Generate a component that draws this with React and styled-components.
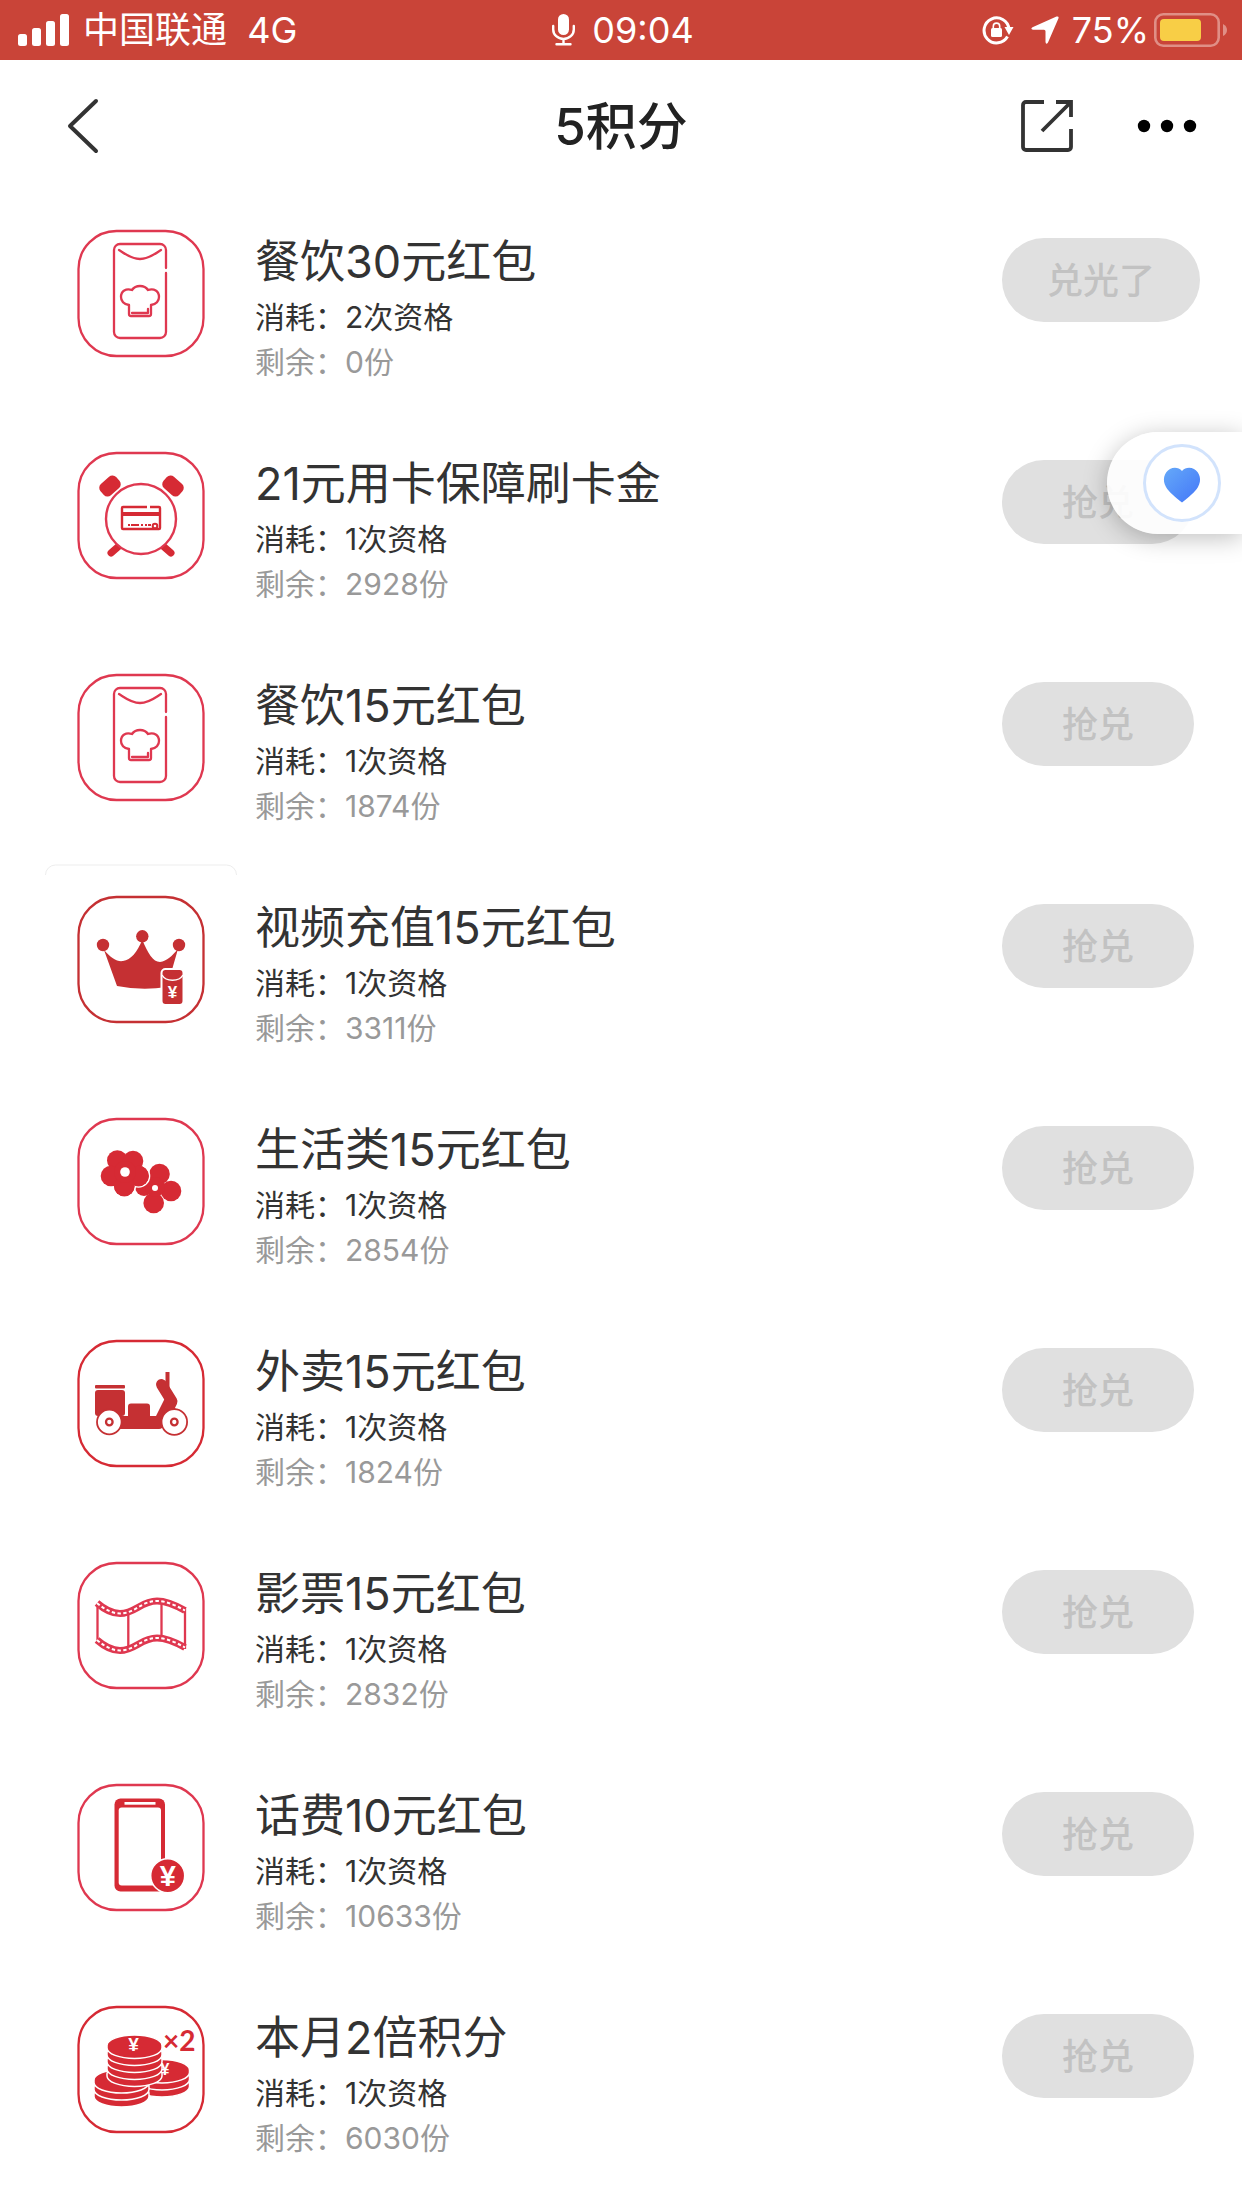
import React from 'react';
import styled, { createGlobalStyle } from 'styled-components';

const RED = '#d62a34';
const PINK = '#df3850';
const DARK_RED = '#c53033';

const coupons = [
  { id: 1, name: '餐饮30元红包', cost: 2, left: 0, icon: 'food', soldOut: true },
  { id: 2, name: '21元用卡保障刷卡金', cost: 1, left: 2928, icon: 'clock' },
  { id: 3, name: '餐饮15元红包', cost: 1, left: 1874, icon: 'food' },
  { id: 4, name: '视频充值15元红包', cost: 1, left: 3311, icon: 'crown' },
  { id: 5, name: '生活类15元红包', cost: 1, left: 2854, icon: 'flower' },
  { id: 6, name: '外卖15元红包', cost: 1, left: 1824, icon: 'scooter' },
  { id: 7, name: '影票15元红包', cost: 1, left: 2832, icon: 'film' },
  { id: 8, name: '话费10元红包', cost: 1, left: 10633, icon: 'phone' },
  { id: 9, name: '本月2倍积分', cost: 1, left: 6030, icon: 'coins' },
];

const FoodIcon = () => (
  <g fill="none" stroke={PINK} strokeWidth="2.300" strokeLinecap="round" strokeLinejoin="round">
    <path d="M121 70V52a6 6 0 0 0-6-6H75a6 6 0 0 0-6 6v82a6 6 0 0 0 6 6h40a6 6 0 0 0 6-6V75" />
    <path d="M74 52c5 3 12 9 21 9s16-6 21-9" />
    <path d="M84 107c-5-1-8-4-8-8 0-6 5-9 11-7 2-3 5-4 8-4s6 1 8 4c6-2 11 1 11 7 0 4-3 7-8 8v9a2 2 0 0 1-2 2H86a2 2 0 0 1-2-2z" />
    <path d="M87 115h16v-4" />
  </g>
);

const ClockIcon = () => (
  <g fill={RED}>
    <path d="M66 133l8-7M118 126l8 7" stroke={RED} strokeWidth="7" strokeLinecap="round" />
    <circle cx="96" cy="99" r="35" fill="#fff" stroke={PINK} strokeWidth="2.400" />
    <rect x="54.500" y="58.500" width="21" height="15" rx="5" transform="rotate(-42 65 66)" />
    <rect x="117.500" y="58.500" width="21" height="15" rx="5" transform="rotate(42 128 66)" />
    <path d="M102 87H78a1 1 0 0 0-1 1v20a1 1 0 0 0 1 1h36a1 1 0 0 0 1-1V88a1 1 0 0 0-1-1h-9" fill="none" stroke={RED} strokeWidth="2.400" />
    <rect x="77" y="92" width="38" height="4" />
    <path d="M83 105h2m1 0h8m2 0h2m2 0h2m1 0h3" stroke={RED} strokeWidth="2" />
    <circle cx="110" cy="106" r="2.3" fill="#fff" stroke={RED} strokeWidth="2" />
  </g>
);

const CrownIcon = () => (
  <g fill={DARK_RED}>
    <circle cx="58" cy="81" r="6.2" />
    <circle cx="97.3" cy="72.3" r="6.2" />
    <circle cx="134" cy="81" r="6.2" />
    <path d="M59 86C66 94 72 98 78 97C86 96 92 88 97.300 76C103 89 108 98 115 98C122 97 127 92 133 85L122 123Q97 127 72 122Z" />
    <rect x="116.500" y="105" width="22" height="36" rx="4" stroke="#fff" strokeWidth="2" />
    <path d="M117 111c4 7 17 7 21 0" fill="none" stroke="#fff" strokeWidth="1.5" />
    <Yen x="127.500" y="134" $size={17}>¥</Yen>
  </g>
);

const FlowerIcon = () => (
  <g fill={RED}>
    <circle cx="114.500" cy="88" r="10.3" />
    <circle cx="126" cy="105" r="10.3" />
    <circle cx="108.700" cy="117" r="10.3" />
    <circle cx="99" cy="101" r="9" />
    <circle cx="110" cy="101" r="10" />
    <circle cx="110" cy="102" r="3" fill="#fff" />
    <g stroke="#fff" strokeWidth="3" paintOrder="stroke">
      <circle cx="93.500" cy="90" r="10.3" />
      <circle cx="79.300" cy="100" r="10.3" />
    </g>
    <circle cx="72.300" cy="74.500" r="10.3" />
    <circle cx="88" cy="75" r="10.3" />
    <circle cx="66" cy="90" r="10.3" />
    <circle cx="93.500" cy="90" r="10.3" />
    <circle cx="79.300" cy="100" r="10.3" />
    <circle cx="80" cy="86" r="11" />
    <circle cx="80" cy="86" r="4.8" fill="#fff" />
  </g>
);

const ScooterIcon = () => (
  <g fill={DARK_RED}>
    <rect x="50" y="77" width="30" height="3.500" rx="1" />
    <rect x="50" y="82" width="30" height="26" rx="3" />
    <rect x="83" y="95.500" width="22" height="16" rx="3" />
    <path d="M74 108h37l9-18 12 12-15 18q-1 1-3 1H74z" />
    <path d="M116.500 76.500L127 93.500l-4 8" fill="none" stroke={DARK_RED} strokeWidth="11" strokeLinecap="round" strokeLinejoin="round" />
    <rect x="120.500" y="64" width="4" height="16" />
    <g fill="#fff" stroke={DARK_RED} strokeWidth="1.800">
      <circle cx="64.300" cy="114" r="12.300" />
      <circle cx="129.300" cy="114" r="12.800" />
      <circle cx="64.300" cy="114" r="3.300" strokeWidth="2.300" />
      <circle cx="129.300" cy="114" r="3.300" strokeWidth="2.300" />
    </g>
  </g>
);

const FilmIcon = () => {
  const strip = 'M52 73C60 80 68 83.500 75 83.500C90 83.500 96 71 112 71C122 71 132 76 140 80.500';
  return (
    <g fill="none" stroke={PINK} strokeWidth="2.300">
      <path d="M52.500 76v34M140 79v40M83.300 85v32M116.500 72v34" />
      <path d={strip} strokeWidth="7" />
      <path d={strip} stroke="#fff" strokeWidth="2" strokeDasharray="3.400 2.400" />
      <g transform="translate(0 37)">
        <path d={strip} strokeWidth="7" />
        <path d={strip} stroke="#fff" strokeWidth="2" strokeDasharray="3.400 2.400" />
      </g>
    </g>
  );
};

const PhoneIcon = () => (
  <g fill={RED}>
    <rect x="69.500" y="46.500" width="50.500" height="93" rx="6" />
    <rect x="73.700" y="55.500" width="42.300" height="78" rx="3" fill="#fff" />
    <rect x="79.500" y="50" width="31" height="2.700" fill="#fff" />
    <circle cx="122.700" cy="123.700" r="17" stroke="#fff" strokeWidth="1.500" />
    <Yen x="122.700" y="134" $size={29}>¥</Yen>
  </g>
);

// discs are painted from the bottom one up
const Stack = ({ cx, top, count }) =>
  Array.from({ length: count }, (_, i) => count - 1 - i).map((n) => (
    <path
      key={n}
      d={`M${cx - 27.5} ${top + n * 7}a27.5 10.500 0 0 1 55 0v2.500a27.5 10.500 0 0 1-55 0z`}
      stroke="#fff"
      strokeWidth="1.500"
    />
  ));

const CoinsIcon = () => (
  <g fill={RED}>
    <Stack cx={117} top={96} count={3} />
    <Yen x="120" y="101" $size={16}>¥</Yen>
    <Stack cx={76.5} top={106} count={3} />
    <Stack cx={89.5} top={71.5} count={5} />
    <Yen x="88.500" y="77" $size={19}>¥</Yen>
    <Times x="118" y="77">×2</Times>
  </g>
);

const icons = {
  food: { Art: FoodIcon, color: PINK },
  clock: { Art: ClockIcon, color: PINK },
  crown: { Art: CrownIcon, color: DARK_RED },
  flower: { Art: FlowerIcon, color: PINK },
  scooter: { Art: ScooterIcon, color: RED },
  film: { Art: FilmIcon, color: PINK },
  phone: { Art: PhoneIcon, color: PINK },
  coins: { Art: CoinsIcon, color: RED },
};

const CouponIcon = ({ name }) => {
  const { Art, color } = icons[name];
  return (
    <Thumb viewBox="0 0 192 192" aria-hidden="true">
      {name === 'crown' && <path d="M.5 11a10 10 0 0 1 10-10h171a10 10 0 0 1 10 10" fill="none" stroke="#ededed" />}
      <rect x="33.500" y="33" width="125" height="125" rx="38" fill="#fff" stroke={color} strokeWidth="2.300" />
      <Art />
    </Thumb>
  );
};

const Coupon = ({ data }) => (
  <Row>
    <CouponIcon name={data.icon} />
    <Info>
      <Name>{data.name}</Name>
      <Cost>消耗：{data.cost}次资格</Cost>
      <Left>剩余：{data.left}份</Left>
    </Info>
    <Action>
      <GetButton type="button" disabled>{data.soldOut ? '兑光了' : '抢兑'}</GetButton>
    </Action>
  </Row>
);

const App = () => (
  <>
    <GlobalStyle />
    <StatusBar>
      <StatusSide>
        <svg width="51" height="32" viewBox="0 0 51 32" fill="#fff" aria-hidden="true">
          <rect x="0" y="20" width="9" height="12" rx="2.500" />
          <rect x="14" y="14" width="9" height="18" rx="2.500" />
          <rect x="28" y="7" width="9" height="25" rx="2.500" />
          <rect x="42" y="0" width="9" height="32" rx="2.500" />
        </svg>
        <Carrier>中国联通&nbsp; 4G</Carrier>
      </StatusSide>
      <Clock>
        <svg width="23" height="32" viewBox="0 0 23 32" aria-hidden="true">
          <rect x="6" y="0" width="11" height="21" rx="5.500" fill="#fff" />
          <path d="M1.200 12v3.500a10.300 9.500 0 0 0 20.600 0V12M11.500 25v5M4.500 30.300h14" fill="none" stroke="#fff" strokeWidth="2.400" strokeLinecap="round" />
        </svg>
        <span>09:04</span>
      </Clock>
      <StatusSide $end>
        <svg width="32" height="30" viewBox="0 0 32 30" aria-hidden="true">
          <path d="M27 14A12.500 12.500 0 1 0 25.500 21.500" fill="none" stroke="#fff" strokeWidth="3" />
          <path d="M22.500 12h9l-4.500 8z" fill="#fff" />
          <rect x="9" y="13" width="11" height="9" rx="1.500" fill="#fff" />
          <path d="M11.300 13.500v-2.200a3.200 3.200 0 0 1 6.400 0v2.200" fill="none" stroke="#fff" strokeWidth="1.600" />
        </svg>
        <svg width="28" height="28" viewBox="0 0 28 28" fill="#fff" aria-hidden="true">
          <path d="M25.500.6Q28.300 0 27.400 2.500L17 26.500Q15 29.200 14.500 26V15.200Q14.500 13.700 13 13.700H2Q-1 13 1.500 11.200Z" />
        </svg>
        <Percent>75%</Percent>
        <svg width="74" height="34" viewBox="0 0 74 34" aria-hidden="true">
          <rect x="1.300" y="1.300" width="63.400" height="31.400" rx="8" fill="none" stroke="#e08f86" strokeWidth="2.600" />
          <path d="M69 11q4 2 4 6t-4 6z" fill="#e08f86" />
          <rect x="6" y="6" width="41" height="22" rx="4" fill="#f8ce46" />
        </svg>
      </StatusSide>
    </StatusBar>

    <NavBar>
      <BackButton type="button" aria-label="返回">
        <svg width="34" height="56" viewBox="0 0 34 56" fill="none" stroke="#333" strokeWidth="4" strokeLinecap="round" strokeLinejoin="round">
          <path d="M30 3L4 28l26 25" />
        </svg>
      </BackButton>
      <Title>5积分</Title>
      <Tools>
        <IconButton type="button" aria-label="分享">
          <svg width="52" height="52" viewBox="0 0 52 52" fill="none" stroke="#333" strokeWidth="3.800">
            <path d="M23 2H5a3 3 0 0 0-3 3v42a3 3 0 0 0 3 3h42a3 3 0 0 0 3-3V29" />
            <path d="M35 2h15v15M50 2L21 31" />
          </svg>
        </IconButton>
        <IconButton type="button" aria-label="更多">
          <svg width="60" height="14" viewBox="0 0 60 14">
            <circle cx="7" cy="7" r="6.200" />
            <circle cx="30" cy="7" r="6.200" />
            <circle cx="53" cy="7" r="6.200" />
          </svg>
        </IconButton>
      </Tools>
    </NavBar>

    <List>
      {coupons.map((item) => (
        <Coupon key={item.id} data={item} />
      ))}
    </List>

    <Favorite type="button" aria-label="收藏">
      <svg width="78" height="78" viewBox="0 0 78 78">
        <defs>
          <linearGradient id="heart" x1="0" y1="0" x2="1" y2="1">
            <stop offset="0" stopColor="#65a9f9" />
            <stop offset="1" stopColor="#4376f8" />
          </linearGradient>
        </defs>
        <circle cx="39" cy="39" r="37.500" fill="#fff" stroke="#d2e3fc" strokeWidth="3" />
        <path d="M39 27C42 23.500 47 23 51 25C57 28.500 59 36 55 43C52 48 46 53 39 58.500C32 53 26 48 23 43C19 36 21 28.500 27 25C31 23 36 23.500 39 27Z" fill="url(#heart)" />
      </svg>
    </Favorite>
  </>
);

const GlobalStyle = createGlobalStyle`
  * {
    box-sizing: border-box;
  }
  body {
    margin: 0;
    background: #fff;
    color: #333;
    font-family: Inter, "Noto Sans CJK SC", sans-serif;
  }
`;

const StatusBar = styled.header`
  display: grid;
  grid-template-columns: 1fr auto 1fr;
  align-items: center;
  height: 60px;
  padding: 0 14px 0 18px;
  background: #c94438;
  color: #fff;
  font-size: 36px;
  line-height: 60px;
`;

const StatusSide = styled.div`
  display: flex;
  align-items: center;
  justify-content: ${(props) => (props.$end ? 'flex-end' : 'flex-start')};
  gap: ${(props) => (props.$end ? '5px' : '14px')};

  svg:first-child {
    margin-right: ${(props) => (props.$end ? '12px' : '0')};
  }
`;

const Carrier = styled.span`
  white-space: nowrap;
`;

const Percent = styled.span`
  margin-left: 8px;
`;

const Clock = styled.div`
  display: flex;
  align-items: center;
  gap: 17px;
`;

const NavBar = styled.nav`
  display: grid;
  grid-template-columns: 1fr auto 1fr;
  align-items: center;
  height: 132px;
  padding: 0 45px;
`;

const Title = styled.h1`
  margin: 0;
  padding-top: 2px;
  color: #222;
  font-size: 51px;
  font-weight: 500;
  line-height: 68px;
`;

const Tools = styled.div`
  display: flex;
  align-items: center;
  justify-content: flex-end;
  gap: 64px;
`;

const IconButton = styled.button`
  display: flex;
  justify-self: start;
  padding: 0;
  border: 0;
  background: none;
`;

const BackButton = styled(IconButton)`
  padding-left: 21px;
`;

const List = styled.ul`
  margin: 0;
  padding: 3px 0 0;
  list-style: none;
`;

const Row = styled.li`
  display: flex;
  align-items: flex-start;
  padding-left: 45px;
`;

const Thumb = styled.svg`
  flex: none;
  width: 192px;
  height: 192px;
  margin-top: 3px;
`;

const Info = styled.div`
  flex: 1;
  min-width: 0;
  padding: 34px 0 32px 18px;
`;

const Name = styled.h2`
  margin: 0;
  font-size: 45px;
  font-weight: 400;
  line-height: 66px;
`;

const Cost = styled.p`
  margin: 0;
  font-size: 30px;
  line-height: 45px;
`;

const Left = styled(Cost)`
  color: #999;
`;

const Action = styled.div`
  flex: none;
  width: 240px;
  padding-top: 43px;
`;

const GetButton = styled.button`
  min-width: 192px;
  height: 84px;
  padding: 0 45px 4px;
  border: 0;
  border-radius: 42px;
  background: #e0e0e0;
  color: #c2c2c2;
  font-family: inherit;
  font-size: 36px;
  font-weight: 500;
`;

const Favorite = styled.button`
  position: fixed;
  top: 432px;
  right: 0;
  display: flex;
  align-items: center;
  padding: 12px 21px 12px 36px;
  border: 0;
  border-radius: 51px 0 0 51px;
  background: rgba(255, 255, 255, 0.9);
  box-shadow: 0 4px 24px rgba(0, 0, 0, 0.25);
`;

const Yen = styled.text`
  fill: #fff;
  font-family: "Liberation Sans", sans-serif;
  font-size: ${(props) => props.$size}px;
  font-weight: 700;
  text-anchor: middle;
`;

const Times = styled.text`
  fill: ${RED};
  font-family: Lato, sans-serif;
  font-size: 28px;
  font-weight: 700;
`;

export default App;
